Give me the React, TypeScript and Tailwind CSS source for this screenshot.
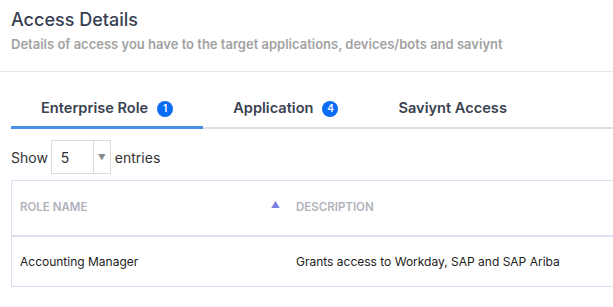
import React, { useState } from 'react';

const font = { fontFamily: 'Inter, "Noto Sans", sans-serif' };

interface Tab {
  label: string;
  count?: number;
}

const tabs: Tab[] = [
  { label: 'Enterprise Role', count: 1 },
  { label: 'Application', count: 4 },
  { label: 'Saviynt Access' },
];

export default function App() {
  const [active, setActive] = useState(0);
  const [pageSize, setPageSize] = useState('5');

  return (
    <div className="w-[613px] h-[307px] overflow-hidden bg-white" style={font}>
      {/* heading */}
      <div className="px-[11px] pt-[8px] h-[72px] border-b border-[#e6e6e6]">
        <h1 className="text-[18px] leading-[24px] font-medium text-[#363f52]">Access Details</h1>
        <p className="mt-[4px] text-[13px] leading-[16px] font-semibold text-[#a2a2a2] whitespace-nowrap">
          Details of access you have to the target applications, devices/bots and saviynt
        </p>
      </div>

      {/* tabs */}
      <div className="ml-[11px] mt-[19px] flex border-b-2 border-[#e0e0e0]">
        {tabs.map((t, i) => (
          <button
            key={t.label}
            onClick={() => setActive(i)}
            className={`-mb-[2px] h-[38px] px-[30px] flex items-center gap-[9px] text-[14.6px] font-semibold text-[#3b4252] border-b-[3px] ${
              active === i ? 'border-[#4a8fe6]' : 'border-transparent'
            }`}
          >
            {t.label}
            {t.count !== undefined && (
              <span className="w-[16px] h-[16px] rounded-full bg-[#0b6cf5] text-white text-[10px] font-semibold flex items-center justify-center">
                {t.count}
              </span>
            )}
          </button>
        ))}
      </div>

      {/* show entries */}
      <div className="ml-[11px] mt-[11px] flex items-center text-[14px] text-[#333]">
        <span>Show</span>
        <div className="ml-[3px] w-[60px] h-[34px] border border-[#dcdcdc] flex">
          <select
            value={pageSize}
            onChange={(e) => setPageSize(e.target.value)}
            className="appearance-none w-[41px] pl-[9px] text-[14px] text-[#333] bg-transparent outline-none"
          >
            <option>5</option>
            <option>10</option>
            <option>25</option>
          </select>
          <div className="flex-1 border-l border-[#dcdcdc] flex items-center justify-center text-[8px] text-[#888]">
            ▼
          </div>
        </div>
        <span className="ml-[4px]">entries</span>
      </div>

      {/* table */}
      <div className="ml-[11px] mt-[6px] w-[620px] border border-[#dcdff0]">
        <div className="flex h-[56px] items-center border-b-2 border-[#dcdff0] text-[11.5px] font-semibold text-[#b0b2bb] uppercase">
          <div className="w-[276px] pl-[8px] pr-[8px] flex items-center justify-between">
            <span>Role Name</span>
            <span className="text-[9px] text-[#7b7fe0] -mt-[6px]">▲</span>
          </div>
          <div className="pl-[8px]">Description</div>
        </div>
        <div className="flex h-[49px] items-center text-[12px] text-[#222]">
          <div className="w-[276px] pl-[8px]">Accounting Manager</div>
          <div className="pl-[8px]">Grants access to Workday, SAP and SAP Ariba</div>
        </div>
      </div>
    </div>
  );
}
